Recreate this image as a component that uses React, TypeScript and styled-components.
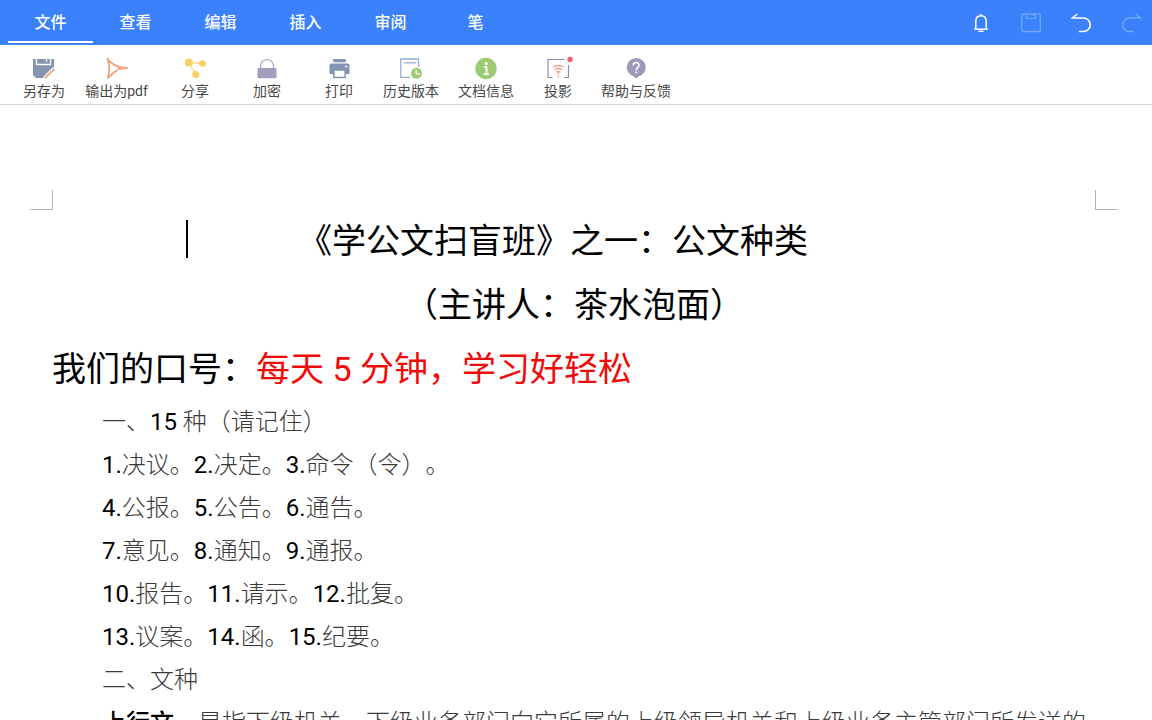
import React from 'react';
import styled, { createGlobalStyle } from 'styled-components';

const GlobalStyle = createGlobalStyle`
  * { box-sizing: border-box; }
  body {
    margin: 0;
    background: #fff;
    font-family: Roboto, "Noto Sans CJK SC", sans-serif;
    text-spacing-trim: space-all;
  }
  button { font: inherit; border: 0; padding: 0; background: none; cursor: pointer; }
`;

const Shell = styled.div`
  display: flex;
  flex-direction: column;
  height: 100vh;
  overflow: hidden;
`;

const Header = styled.header`
  display: flex;
  flex: none;
  justify-content: space-between;
  height: 45px;
  padding-left: 8px;
  background: #3a81fb;
`;

const Tabs = styled.nav`
  display: flex;
`;

const Tab = styled.button<{ $active?: boolean }>`
  width: 85px;
  height: 43px;
  padding-top: 5px;
  color: #fff;
  font-size: 16px;
  font-weight: 500;
  line-height: 24px;
  border-bottom: 2px solid ${(p) => (p.$active ? '#fff' : 'transparent')};
`;

const QuickActions = styled.div`
  display: flex;
  gap: 8px;
`;

const QuickButton = styled.button`
  display: flex;
  align-items: center;
  justify-content: center;
  width: 42px;
  height: 45px;
  color: #fff;

  &:disabled { color: #72a7fd; }
`;

const Toolbar = styled.div`
  display: flex;
  flex: none;
  height: 60px;
  padding-left: 14px;
  background: #fff;
  border-bottom: 1px solid #d2d2d2;
`;

const Tool = styled.button<{ $width: number }>`
  display: flex;
  flex: none;
  flex-direction: column;
  align-items: center;
  width: ${(p) => p.$width}px;
  padding-top: 11px;
  color: #484848;
  font-size: 14px;
  line-height: 22px;
  white-space: nowrap;
`;

const Page = styled.main`
  flex: 1;
  min-height: 0;
  overflow: hidden;
  padding-top: 85px;
  background: #fff;
`;

const Margins = styled.div`
  display: flex;
  justify-content: space-between;
  padding: 0 34px 0 30px;
`;

const MarginCorner = styled.span<{ $side: 'left' | 'right' }>`
  width: 23px;
  height: 20px;
  border-bottom: 1px solid #b4b4b4;
  border-${(p) => (p.$side === 'left' ? 'right' : 'left')}: 1px solid #b4b4b4;
`;

const Sheet = styled.article`
  position: relative;
  padding: 1px 56px 0 52px;
  color: #000;
`;

const Caret = styled.span`
  position: absolute;
  left: 186px;
  top: 10px;
  width: 2px;
  height: 38px;
  background: #000;
`;

const Heading = styled.h1<{ $shift?: boolean }>`
  margin: 0 0 4px;
  padding-right: ${(p) => (p.$shift ? 42 : 0)}px;
  font-size: 34px;
  font-weight: 400;
  line-height: 60px;
  text-align: center;
`;

const Slogan = styled.p`
  margin: 0 0 2px;
  font-size: 34px;
  font-weight: 400;
  line-height: 60px;
`;

const Red = styled.span`
  color: #f00a0a;
`;

const Line = styled.p`
  margin: 0;
  padding-left: 50px;
  color: #3a3a3a;
  font-size: 24px;
  font-weight: 300;
  line-height: 43px;
  white-space: nowrap;
`;

const Num = styled.span`
  color: #000;
  font-weight: 400;
`;

const Term = styled.strong`
  color: #000;
  font-weight: 500;
`;

const Svg = ({ children }: { children: React.ReactNode }) => (
  <svg width="24" height="24" viewBox="0 0 24 24" fill="none" overflow="visible" aria-hidden="true">
    {children}
  </svg>
);

const SaveAsIcon = () => (
  <Svg>
    <path d="M1 3h21v9L12 22H4l-3-3z" fill="#8294b0" />
    <path d="M4.500 3v5.500h14V3" stroke="#fff" strokeWidth="1.300" />
    <path d="M14.500 3v3" stroke="#fff" strokeWidth="1.300" />
    <path d="M22.500 12.500L12.500 22.500" stroke="#fff" strokeWidth="4" />
    <path d="M22.500 12.800L13 22" stroke="#eda580" strokeWidth="1.800" />
  </Svg>
);

const PdfIcon = () => (
  <Svg>
    <path
      d="M2.500 2.800C4.800 9 4.800 16 2.800 22C5.500 19.500 8 16.500 12 14.500M2.500 2.800C6.500 8 11 11.500 22 12C19 12.200 16 12.400 13.500 13"
      stroke="#f0a27a"
      strokeWidth="1.800"
      strokeLinejoin="round"
      strokeLinecap="round"
    />
  </Svg>
);

const ShareIcon = () => (
  <Svg>
    <path d="M12.800 18.500L5.500 6.500L19.500 7.500" stroke="#f8d98a" strokeWidth="1.300" />
    <circle cx="5.800" cy="6.500" r="4" fill="#f8cf68" />
    <circle cx="19.500" cy="7.500" r="3.300" fill="#f8cf68" />
    <circle cx="12.800" cy="18.600" r="3.600" fill="#f8cf68" />
  </Svg>
);

const LockIcon = () => (
  <Svg>
    <path d="M5.500 12V10a6.500 6.500 0 0 1 13 0v2" stroke="#a79fbe" strokeWidth="1.200" />
    <rect x="2.500" y="12" width="19" height="10.300" rx="1" fill="#a59dbe" />
  </Svg>
);

const PrintIcon = () => (
  <Svg>
    <rect x="6" y="3" width="13" height="3.300" rx="1" fill="#8294b0" />
    <path d="M3.500 7.500h17a2 2 0 0 1 2 2V17a1 1 0 0 1-1 1h-18a1 1 0 0 1-1-1V9.500a2 2 0 0 1 1-2z" fill="#8294b0" />
    <rect x="6.800" y="14" width="11.400" height="7.500" fill="#fff" stroke="#8294b0" strokeWidth="1.500" />
    <rect x="18" y="9.800" width="2.300" height="1.500" fill="#fff" />
  </Svg>
);

const HistoryIcon = () => (
  <Svg>
    <path d="M11 21.300H1.800V3H19.500V11" stroke="#93aed3" strokeWidth="1.300" />
    <path d="M5 6.800h12" stroke="#93aed3" strokeWidth="1.300" />
    <circle cx="17.500" cy="17.300" r="5.500" fill="#9ccb74" />
    <path d="M17.200 13.800v4h4" stroke="#fff" strokeWidth="1.300" />
  </Svg>
);

const InfoIcon = () => (
  <Svg>
    <circle cx="12" cy="12.500" r="10.700" fill="#9ccb74" />
    <circle cx="12.200" cy="7.500" r="1.500" fill="#fff" />
    <path d="M10 10.800h2.500v7M9.800 18h5" stroke="#fff" strokeWidth="1.800" />
  </Svg>
);

const CastIcon = () => (
  <Svg>
    <path d="M18.500 3.500H2v18h4.500M22.500 9v12.500H18" stroke="#8593ad" strokeWidth="1.200" />
    <path d="M7 11.300q5.300-3.600 10.600 0M8.500 13.800q3.800-2.600 7.600 0M10.200 16.200q2.100-1.300 4.200 0" stroke="#f0a080" strokeWidth="1.300" />
    <path d="M12.300 16.500v5" stroke="#f0a080" strokeWidth="1.300" strokeDasharray="2 1" />
    <circle cx="24" cy="3.500" r="2.700" fill="#f0607c" />
  </Svg>
);

const HelpIcon = () => (
  <Svg>
    <path d="M12 2a9.500 9.300 0 0 1 3 18.200L12.500 22.500L9.500 20.200A9.500 9.300 0 0 1 12 2z" fill="#9f98b8" />
    <path d="M9.200 9.500c0-3.800 5.800-3.800 5.800-.3c0 2.200-2.800 2.300-2.800 5" stroke="#fff" strokeWidth="1.500" />
    <circle cx="12.200" cy="16.200" r="1" fill="#fff" />
  </Svg>
);

const BellIcon = () => (
  <Svg>
    <path d="M6.800 18V10.500c0-3.500 2-5.700 5.200-5.700s5.200 2.200 5.200 5.700V18M5.200 18.200h13.600M12 3v2" stroke="currentColor" strokeWidth="1.500" />
    <path d="M9.500 20.300h5" stroke="currentColor" strokeWidth="1.300" />
  </Svg>
);

const SaveIcon = () => (
  <Svg>
    <rect x="2.800" y="3" width="18.500" height="17.500" rx="1" stroke="currentColor" strokeWidth="1.300" />
    <path d="M7.500 3v4.500h9V3M14.500 3v2.500" stroke="currentColor" strokeWidth="1.200" />
  </Svg>
);

const UndoIcon = () => (
  <Svg>
    <path d="M3.500 7H14.500a6.600 6.600 0 0 1 0 13.500H10M8.300 3L3.500 7H8" stroke="currentColor" strokeWidth="1.600" />
  </Svg>
);

const RedoIcon = () => (
  <Svg>
    <path d="M21.500 7H10.500a6.600 6.600 0 0 0 0 13.500H15M16.700 3L21.500 7H17" stroke="currentColor" strokeWidth="1.300" />
  </Svg>
);

const tabs = ['文件', '查看', '编辑', '插入', '审阅', '笔'];

const tools = [
  { label: '另存为', width: 60, Icon: SaveAsIcon },
  { label: '输出为pdf', width: 85, Icon: PdfIcon },
  { label: '分享', width: 72, Icon: ShareIcon },
  { label: '加密', width: 72, Icon: LockIcon },
  { label: '打印', width: 72, Icon: PrintIcon },
  { label: '历史版本', width: 72, Icon: HistoryIcon },
  { label: '文档信息', width: 78, Icon: InfoIcon },
  { label: '投影', width: 66, Icon: CastIcon },
  { label: '帮助与反馈', width: 90, Icon: HelpIcon },
];

const actions = [
  { label: '通知', Icon: BellIcon, disabled: false },
  { label: '保存', Icon: SaveIcon, disabled: true },
  { label: '撤销', Icon: UndoIcon, disabled: false },
  { label: '恢复', Icon: RedoIcon, disabled: true },
];

const lines = [
  '一、15 种（请记住）',
  '1.决议。2.决定。3.命令（令）。',
  '4.公报。5.公告。6.通告。',
  '7.意见。8.通知。9.通报。',
  '10.报告。11.请示。12.批复。',
  '13.议案。14.函。15.纪要。',
  '二、文种',
];

const withNumbers = (text: string) =>
  text.split(/(\d+\.?)/).map((part, i) => (i % 2 ? <Num key={i}>{part}</Num> : part));

export default function App() {
  return (
    <Shell>
      <GlobalStyle />
      <Header>
        <Tabs>
          {tabs.map((name, i) => (
            <Tab key={name} $active={i === 0}>{name}</Tab>
          ))}
        </Tabs>
        <QuickActions>
          {actions.map(({ label, Icon, disabled }) => (
            <QuickButton key={label} aria-label={label} disabled={disabled}>
              <Icon />
            </QuickButton>
          ))}
        </QuickActions>
      </Header>
      <Toolbar role="toolbar">
        {tools.map(({ label, width, Icon }) => (
          <Tool key={label} $width={width}>
            <Icon />
            {label}
          </Tool>
        ))}
      </Toolbar>
      <Page>
        <Margins>
          <MarginCorner $side="left" />
          <MarginCorner $side="right" />
        </Margins>
        <Sheet>
          <Caret />
          <Heading $shift>《学公文扫盲班》之一：公文种类</Heading>
          <Heading as="h2">（主讲人：茶水泡面）</Heading>
          <Slogan>
            我们的口号：<Red>每天 5 分钟，学习好轻松</Red>
          </Slogan>
          {lines.map((text) => (
            <Line key={text}>{withNumbers(text)}</Line>
          ))}
          <Line>
            <Term>上行文</Term>，是指下级机关，下级业务部门向它所属的上级领导机关和上级业务主管部门所发送的
          </Line>
        </Sheet>
      </Page>
    </Shell>
  );
}
